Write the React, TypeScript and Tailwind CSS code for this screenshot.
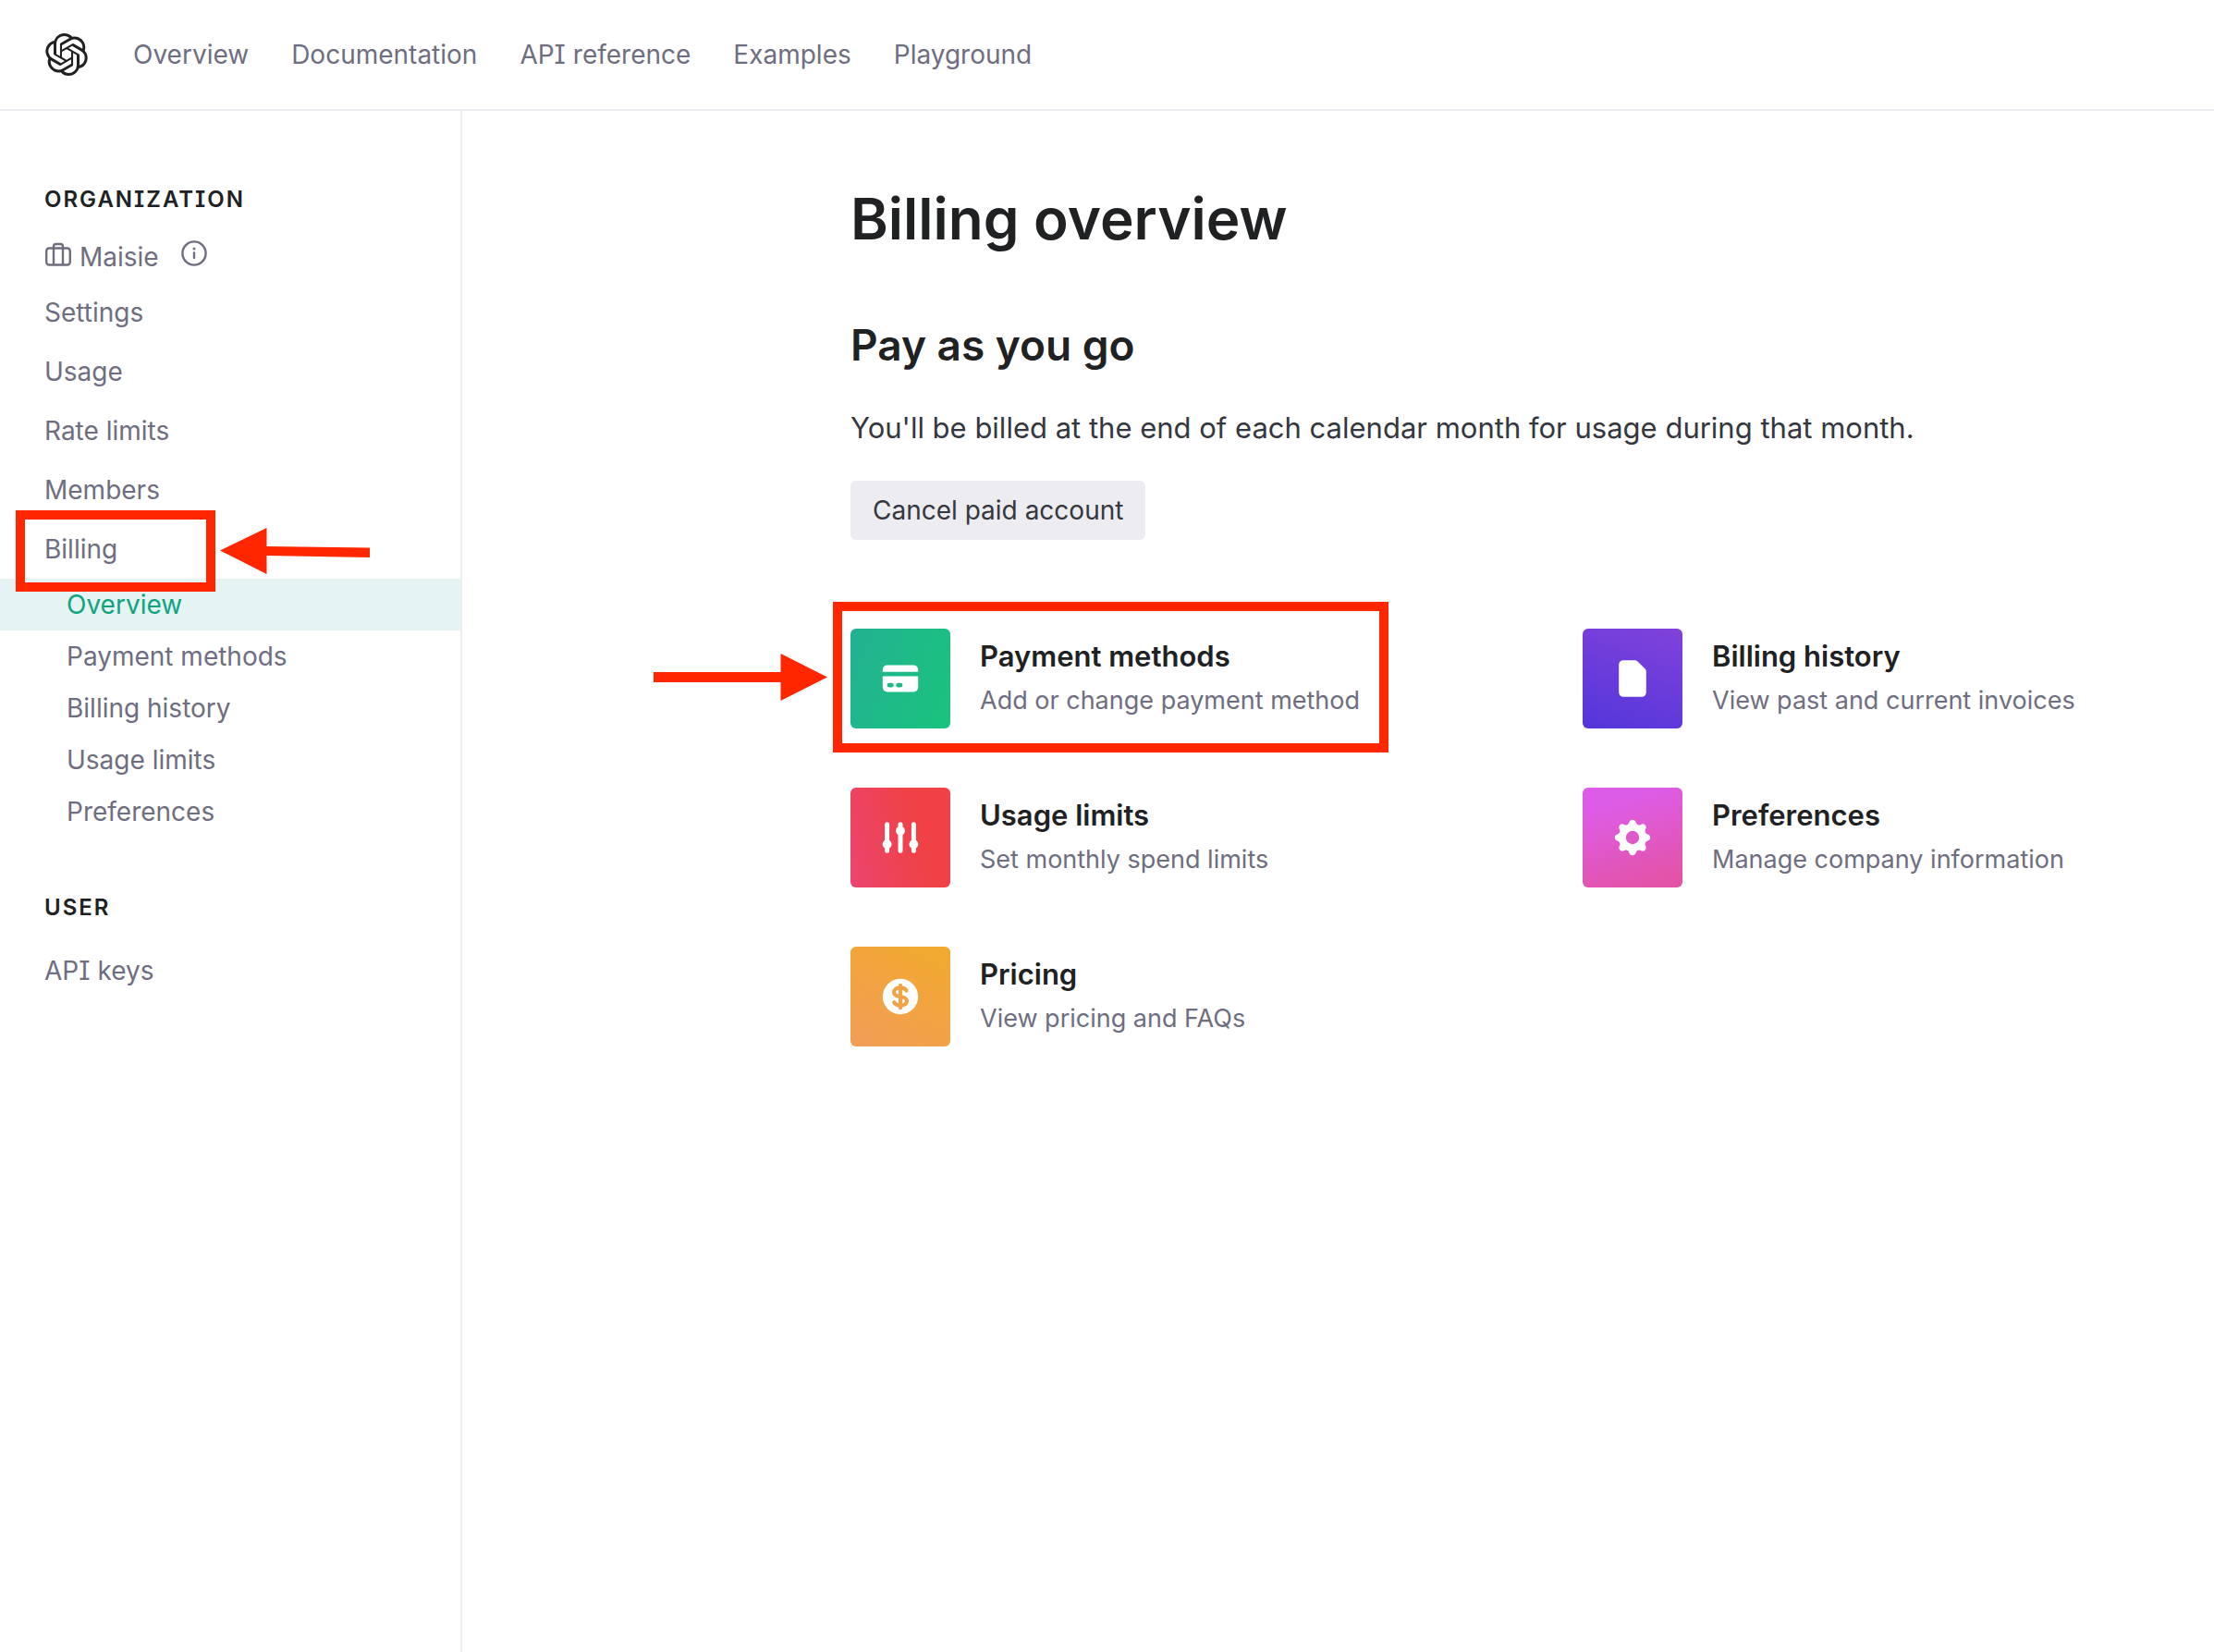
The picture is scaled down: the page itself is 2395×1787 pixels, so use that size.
import React from "react";
import { SiOpenai } from "react-icons/si";

const NAV = ["Overview", "Documentation", "API reference", "Examples", "Playground"];
const ORG_LINKS = ["Settings", "Usage", "Rate limits", "Members"];
const BILLING_LINKS = ["Overview", "Payment methods", "Billing history", "Usage limits", "Preferences"];

function BriefcaseIcon() {
  return (
    <svg className="h-[26px] w-[30px]" viewBox="0 0 30 26" fill="none" stroke="currentColor" strokeWidth="2.4" aria-hidden="true">
      <rect x="2.2" y="6.5" width="25.6" height="18" rx="3" />
      <path d="M10 24.500V4.500a2.500 2.500 0 0 1 2.500-2.500h5A2.500 2.500 0 0 1 20 4.500v20" />
    </svg>
  );
}

function InfoIcon() {
  return (
    <svg className="h-7 w-7" viewBox="0 0 28 28" fill="none" stroke="currentColor" strokeWidth="2.4" aria-hidden="true">
      <circle cx="14" cy="14" r="12.600" />
      <path d="M14 13.500v5.500" strokeLinecap="round" />
      <circle cx="14" cy="9" r="1.500" fill="currentColor" stroke="none" />
    </svg>
  );
}

function CardIcon() {
  return (
    <svg className="h-12 w-12" viewBox="0 0 20 20" fill="white" aria-hidden="true">
      <path d="M4 4a2 2 0 00-2 2v1h16V6a2 2 0 00-2-2H4z" />
      <path
        fillRule="evenodd"
        clipRule="evenodd"
        d="M18 9H2v5a2 2 0 002 2h12a2 2 0 002-2V9zM4 13a1 1 0 011-1h1a1 1 0 110 2H5a1 1 0 01-1-1zm5-1a1 1 0 100 2h1a1 1 0 100-2H9z"
      />
    </svg>
  );
}

function FileIcon() {
  return (
    <svg className="h-12 w-12" viewBox="0 0 48 48" fill="white" aria-hidden="true">
      <path d="M9.200 9a4.800 4.800 0 0 1 4.800-4.800h12.700a4 4 0 0 1 2.800 1.200l8.100 8.200a4 4 0 0 1 1.200 2.800V39a4.800 4.800 0 0 1-4.800 4.800H14A4.800 4.800 0 0 1 9.200 39z" />
    </svg>
  );
}

function SlidersIcon() {
  return (
    <svg className="h-12 w-12" viewBox="0 0 48 48" fill="white" stroke="white" strokeWidth="5" strokeLinecap="round" aria-hidden="true">
      <path d="M9.600 9.700v28.500M24 9.700v28.500M38.400 9.700v28.500" />
      <g stroke="none">
        <circle cx="9.600" cy="31.200" r="4.900" />
        <circle cx="24" cy="16.800" r="4.900" />
        <circle cx="38.400" cy="31.200" r="4.900" />
      </g>
    </svg>
  );
}

function GearIcon() {
  return (
    <svg className="h-12 w-12" viewBox="0 0 20 20" fill="white" aria-hidden="true">
      <path
        fillRule="evenodd"
        clipRule="evenodd"
        d="M11.490 3.170c-.38-1.560-2.600-1.560-2.980 0a1.532 1.532 0 01-2.286.948c-1.372-.836-2.942.734-2.106 2.106.54.886.061 2.042-.947 2.287-1.561.379-1.561 2.600 0 2.978a1.532 1.532 0 01.947 2.287c-.836 1.372.734 2.942 2.106 2.106a1.532 1.532 0 012.287.947c.379 1.561 2.600 1.561 2.978 0a1.533 1.533 0 012.287-.947c1.372.836 2.942-.734 2.106-2.106a1.533 1.533 0 01.947-2.287c1.561-.379 1.561-2.600 0-2.978a1.532 1.532 0 01-.947-2.287c.836-1.372-.734-2.942-2.106-2.106a1.532 1.532 0 01-2.287-.947zM10 13a3 3 0 100-6 3 3 0 000 6z"
      />
    </svg>
  );
}

function DollarIcon() {
  return (
    <svg className="h-12 w-12" viewBox="0 0 48 48" fill="none" aria-hidden="true">
      <circle cx="24" cy="24" r="19.200" fill="white" />
      <path
        d="M30.500 17.500c-1-2-3.500-3.200-6.500-3.200-4 0-7 1.900-7 4.900 0 3.200 3.200 4.200 7 4.800s7 1.600 7 4.800c0 3-3 4.900-7 4.900-3 0-5.600-1.300-6.800-3.400M24 11.800v24.400"
        stroke="#f1a348"
        strokeWidth="4.200"
        strokeLinecap="round"
      />
    </svg>
  );
}

const CARDS = [
  { title: "Payment methods", text: "Add or change payment method", tile: "bg-[linear-gradient(110deg,#23b192,#19c37d)]", icon: <CardIcon />, marked: true },
  { title: "Billing history", text: "View past and current invoices", tile: "bg-[linear-gradient(20deg,#5436da,#8142db)]", icon: <FileIcon /> },
  { title: "Usage limits", text: "Set monthly spend limits", tile: "bg-[linear-gradient(75deg,#ec4570_0%,#ef4146_65%)]", icon: <SlidersIcon /> },
  { title: "Preferences", text: "Manage company information", tile: "bg-[linear-gradient(162deg,#dd5ce5_20%,#e4529f)]", icon: <GearIcon /> },
  { title: "Pricing", text: "View pricing and FAQs", tile: "bg-[linear-gradient(30deg,#f29d58,#f2a930_90%)]", icon: <DollarIcon /> },
];

export default function App() {
  return (
    <div className="flex min-h-screen flex-col bg-white font-['Inter',sans-serif] text-[28px] text-[#6e6e80] [font-feature-settings:'cv08']">
      <header className="flex h-30 shrink-0 items-center gap-12 border-b-2 border-[#ececf1] px-12">
        <a href="#home" aria-label="Home" className="flex size-12 items-center justify-center text-[#202123]">
          <SiOpenai className="size-[46px]" />
        </a>
        <nav className="flex gap-[46px]">
          {NAV.map((item) => (
            <a key={item} href="#nav">{item}</a>
          ))}
        </nav>
      </header>

      <div className="flex grow">
        <aside className="w-[500px] shrink-0 border-r-2 border-[#ececf1] pt-20">
          <h2 className="px-12 text-[24px] leading-8 font-semibold tracking-[2px] text-[#202123]">ORGANIZATION</h2>
          <div className="mt-[18px] flex items-baseline px-12 leading-14">
            <BriefcaseIcon />
            <span className="ml-2">Maisie</span>
            <button type="button" aria-label="Organization info" className="ml-6">
              <InfoIcon />
            </button>
          </div>
          <nav>
            {ORG_LINKS.map((item) => (
              <a key={item} href="#org" className="block px-12 leading-16">{item}</a>
            ))}
            <div className="relative">
              <a href="#billing" className="block px-12 leading-16">Billing</a>
              <div className="pointer-events-none absolute -top-[10px] left-[17px] z-10 h-[88px] w-[216px] border-10 border-[#ff2600]" />
              <svg className="pointer-events-none absolute top-[9px] left-[238px] h-[50px] w-[162px]" viewBox="0 0 162 50" fill="#ff2600" aria-hidden="true">
                <path d="M0 24.500 50.500 0V20L162 21.500V32L50.500 30V50z" />
              </svg>
            </div>
            {BILLING_LINKS.map((item, i) => (
              <a
                key={item}
                href="#billing"
                className={i === 0 ? "block bg-[#e5f3f2] px-18 leading-14 text-[#10a37f]" : "block px-18 leading-14"}
              >
                {item}
              </a>
            ))}
          </nav>
          <h2 className="mt-15 px-12 text-[24px] leading-8 font-semibold tracking-[2px] text-[#202123]">USER</h2>
          <a href="#keys" className="mt-5 block px-12 leading-16">API keys</a>
        </aside>

        <main className="min-w-0 grow pt-[77px] pl-[420px]">
          <h1 className="text-[62px] leading-20 font-semibold text-[#202123]">Billing overview</h1>
          <h2 className="mt-16 text-[46px] leading-16 font-semibold text-[#202123]">Pay as you go</h2>
          <p className="mt-[34px] text-[31px] leading-12 text-[#353740]">
            You'll be billed at the end of each calendar month for usage during that month.
          </p>
          <button type="button" className="mt-[33px] h-16 rounded-md bg-[#ececf1] px-6 text-[#353740]">
            Cancel paid account
          </button>
          <div className="mt-24 grid grid-cols-[792px_1fr] gap-y-16">
            {CARDS.map((card) => (
              <a key={card.title} href="#card" className="relative flex items-center gap-8">
                <span className={`flex size-27 items-center justify-center rounded-md ${card.tile}`}>{card.icon}</span>
                <span>
                  <span className="block text-[31px] leading-12 font-semibold text-[#202123]">{card.title}</span>
                  <span className="block text-[27px] leading-12">{card.text}</span>
                </span>
                {card.marked && (
                  <>
                    <span className="pointer-events-none absolute -top-[29px] -left-[19px] h-[163px] w-[601px] border-10 border-[#ff2600]" />
                    <svg className="pointer-events-none absolute top-[27px] -left-[213px] h-[51px] w-[188px]" viewBox="0 0 188 51" fill="#ff2600" aria-hidden="true">
                      <path d="M188 25.500 137.500 0V20H0V31H137.500V51z" />
                    </svg>
                  </>
                )}
              </a>
            ))}
          </div>
        </main>
      </div>
    </div>
  );
}
